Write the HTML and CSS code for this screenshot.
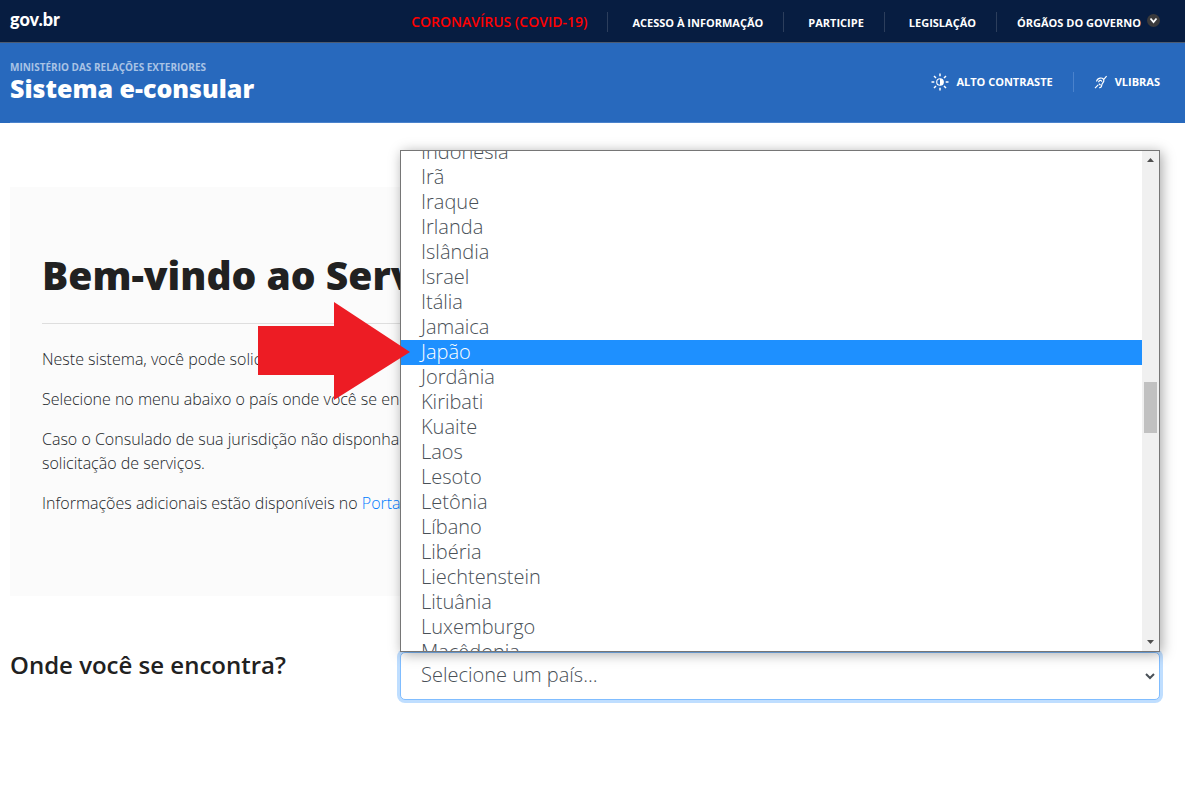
FILE: index.html
```html
<!doctype html>
<html lang="pt-br">

<head>
	<meta charset="utf-8">
	<meta name="viewport" content="width=device-width, initial-scale=1">
	<title>Sistema e-consular</title>
	<link rel="stylesheet" href="styles.css">
</head>

<body>
	<nav class="topbar">
		<a href="#" class="brand">gov.br</a>
		<ul class="menu">
			<li><a href="#" class="covid">CORONAVÍRUS (COVID-19)</a></li>
			<li><a href="#">ACESSO À INFORMAÇÃO</a></li>
			<li><a href="#">PARTICIPE</a></li>
			<li><a href="#">LEGISLAÇÃO</a></li>
			<li>
				<a href="#">ÓRGÃOS DO GOVERNO</a>
				<svg class="chevron" viewBox="0 0 13 13">
					<circle cx="6.5" cy="6.5" r="6.5" fill="#3a3a3c" />
					<path d="M3.5 4.5l3 3.5 3-3.5" fill="none" stroke="#fff" stroke-width="1.8" />
				</svg>
			</li>
		</ul>
	</nav>
	<header class="header">
		<div class="header-inner">
			<div class="title">
				<a href="#" class="ministry">MINISTÉRIO DAS RELAÇÕES EXTERIORES</a>
				<a href="#" class="system">Sistema e-consular</a>
			</div>
			<ul class="tools">
				<li>
					<a href="#">
						<svg class="icon-sun" viewBox="0 0 18 18" fill="none" stroke="#fff" stroke-width="1.5">
							<circle cx="9" cy="9" r="3.3" stroke-width="1.1" />
							<path d="M9 5.7a3.3 3.3 0 0 1 0 6.6z" fill="#fff" stroke="none" />
							<path d="M9 .5v2.8M9 14.7v2.8M.5 9h2.8M14.7 9h2.8M3 3l2 2M13 13l2 2M15 3l-2 2M5 13l-2 2" />
						</svg>
						ALTO CONTRASTE
					</a>
				</li>
				<li>
					<a href="#">
						<svg class="icon-deaf" viewBox="0 0 14 14" fill="none" stroke="#fff" stroke-width="1.2">
							<path d="M1 13.200l3.200-3.400M9.800 4.400L12.600 1.200" />
							<path d="M2.500 6.500C3.200 2.600 9 1.800 9.800 5c.5 2.500-1.800 3-2 5-.3 2-1.200 2.900-2.600 2.700" />
							<path d="M4.500 7.200c.3-2.400 3.300-2.400 3.200-.5M4.800 8.700l1.800 1.600" />
						</svg>
						VLIBRAS
					</a>
				</li>
			</ul>
		</div>
	</header>
	<main class="container">
		<section class="welcome">
			<h1>Bem-vindo ao Serviço</h1>
			<hr>
			<p>Neste sistema, você pode solicitar serviços do</p>
			<p>Selecione no menu abaixo o país onde você se encontra.</p>
			<p>Caso o Consulado de sua jurisdição não disponha<br>
				solicitação de serviços.</p>
			<p>Informações adicionais estão disponíveis no <a href="#">Portal</a></p>
		</section>
		<form class="country">
			<label for="pais">Onde você se encontra?</label>
			<div class="field">
				<select id="pais" name="pais">
					<option>Selecione um país…</option>
				</select>
				<svg class="caret" viewBox="0 0 10 7">
					<path d="M1 1l4 4 4-4" fill="none" stroke="#495057" stroke-width="2" />
				</svg>
				<div class="popup">
					<div class="list">
						<ul role="listbox" aria-label="Países">
							<li role="option">Indonésia</li>
							<li role="option">Irã</li>
							<li role="option">Iraque</li>
							<li role="option">Irlanda</li>
							<li role="option">Islândia</li>
							<li role="option">Israel</li>
							<li role="option">Itália</li>
							<li role="option">Jamaica</li>
							<li role="option" aria-selected="true" class="selected">Japão</li>
							<li role="option">Jordânia</li>
							<li role="option">Kiribati</li>
							<li role="option">Kuaite</li>
							<li role="option">Laos</li>
							<li role="option">Lesoto</li>
							<li role="option">Letônia</li>
							<li role="option">Líbano</li>
							<li role="option">Libéria</li>
							<li role="option">Liechtenstein</li>
							<li role="option">Lituânia</li>
							<li role="option">Luxemburgo</li>
							<li role="option">Macêdonia</li>
						</ul>
					</div>
					<div class="scrollbar">
						<svg viewBox="0 0 7 4"><path d="M0 4l3.500-4L7 4z" fill="#505050" /></svg>
						<div class="thumb"></div>
						<svg viewBox="0 0 7 4"><path d="M0 0l3.500 4L7 0z" fill="#505050" /></svg>
					</div>
				</div>
				<svg class="arrow" viewBox="0 0 152 98">
					<path d="M0 24h76V0l76 50-76 48V73H0z" fill="#ed1c24" />
				</svg>
			</div>
		</form>
	</main>
</body>

</html>
```
FILE: styles.css
```css
* {
	box-sizing: border-box;
}

body {
	margin: 0;
	background: #fff;
	color: #212529;
	font-family: "Open Sans", sans-serif;
	font-size: 16px;
	font-weight: 300;
	line-height: 24px;
}

ul {
	list-style: none;
	margin: 0;
	padding: 0;
}

a {
	color: #007bff;
	text-decoration: none;
}

.topbar {
	display: flex;
	justify-content: space-between;
	align-items: center;
	height: 43px;
	padding: 0 25px 0 10px;
	background: #071d41;
	border-bottom: 1px solid #4d5b70;
}

.brand {
	padding-bottom: 4px;
	color: #fff;
	font-family: Lato, sans-serif;
	font-size: 18px;
	font-weight: 900;
	line-height: 20px;
}

.menu {
	display: flex;
	align-items: center;
	padding-top: 2px;
}

.menu li {
	display: flex;
	align-items: center;
	height: 20px;
	padding: 0 20px 0 24px;
	border-right: 1px solid #2c3e5c;
}

.menu li:last-child {
	padding: 0 0 0 20px;
	border: none;
}

.menu a {
	padding-top: 2px;
	color: #fff;
	font-size: 11px;
	font-weight: 700;
}

.menu .covid {
	padding: 0;
	color: #ff0000;
	font-size: 14px;
	font-weight: 600;
}

.chevron {
	width: 13px;
	height: 13px;
	margin: 0 0 4px 6px;
}

.header {
	height: 80px;
	padding: 0 25px 0 10px;
	background: #2869bd;
}

.header-inner {
	display: flex;
	justify-content: space-between;
	align-items: center;
	height: 100%;
	border-bottom: 1px solid #4a82cc;
}

.title {
	display: flex;
	flex-direction: column;
	padding-bottom: 4px;
}

.ministry {
	color: #a9c3e5;
	font-size: 10px;
	font-weight: 700;
	line-height: 14px;
}

.system {
	color: #fff;
	font-size: 25px;
	font-weight: 800;
	line-height: 28px;
}

.tools {
	display: flex;
	padding-bottom: 2px;
}

.tools li + li {
	margin-left: 20px;
	padding-left: 20px;
	border-left: 1px solid #4a82cc;
}

.tools a {
	display: flex;
	align-items: center;
	height: 20px;
	color: #fff;
	font-size: 11px;
	font-weight: 700;
}

.icon-sun {
	width: 18px;
	height: 18px;
	margin-right: 7px;
}

.icon-deaf {
	width: 14px;
	height: 14px;
	margin-right: 7px;
}

.container {
	padding: 64px 25px 32px 10px;
}

.welcome {
	padding: 64px 32px 65px;
	background: #fbfbfb;
}

.welcome h1 {
	margin: 0 0 24px;
	color: #212121;
	font-size: 39px;
	font-weight: 800;
	line-height: 48px;
}

.welcome hr {
	margin: 0 0 23px;
	border: none;
	border-top: 1px solid #dedede;
}

.welcome p {
	margin: 0 0 16px;
}

.country {
	display: flex;
	margin-top: 56px;
}

.country label {
	width: 390px;
	color: #212121;
	font-size: 24px;
	font-weight: 600;
	line-height: 26px;
}

.field {
	position: relative;
	flex: 1;
}

.field select {
	display: block;
	width: 100%;
	height: 48px;
	padding: 0 20px 2px;
	border: 1px solid #80bdff;
	border-radius: 5px;
	outline: none;
	appearance: none;
	background: #fff;
	box-shadow: 0 0 0 3px #bfdeff;
	color: #495057;
	font: inherit;
	font-size: 20px;
}

.caret {
	position: absolute;
	right: 5px;
	top: 21px;
	width: 10px;
	height: 7px;
}

.popup {
	position: absolute;
	left: 0;
	bottom: 100%;
	display: flex;
	width: 100%;
	height: 502px;
	border: 1px solid #767676;
	background: #fff;
	box-shadow: 2px 2px 12px rgba(0, 0, 0, .35);
}

.list {
	flex: 1;
	overflow: hidden;
}

/* list is scrolled half way through the first row */
.list ul {
	margin-top: -11px;
}

.list li {
	height: 25px;
	padding-left: 20px;
	color: #495057;
	font-size: 20px;
	line-height: 24px;
}

.list .selected {
	background: #1e90ff;
	color: #fff;
}

.scrollbar {
	display: flex;
	flex-direction: column;
	align-items: center;
	width: 17px;
	padding: 7px 2px;
	background: #f0f0f0;
}

.scrollbar svg {
	width: 7px;
	height: 4px;
}

.thumb {
	width: 100%;
	height: 51px;
	margin: 220px 0 auto;
	background: #c1c1c1;
}

.arrow {
	position: absolute;
	right: calc(100% - 10px);
	bottom: 300px;
	width: 152px;
	height: 98px;
}
```
